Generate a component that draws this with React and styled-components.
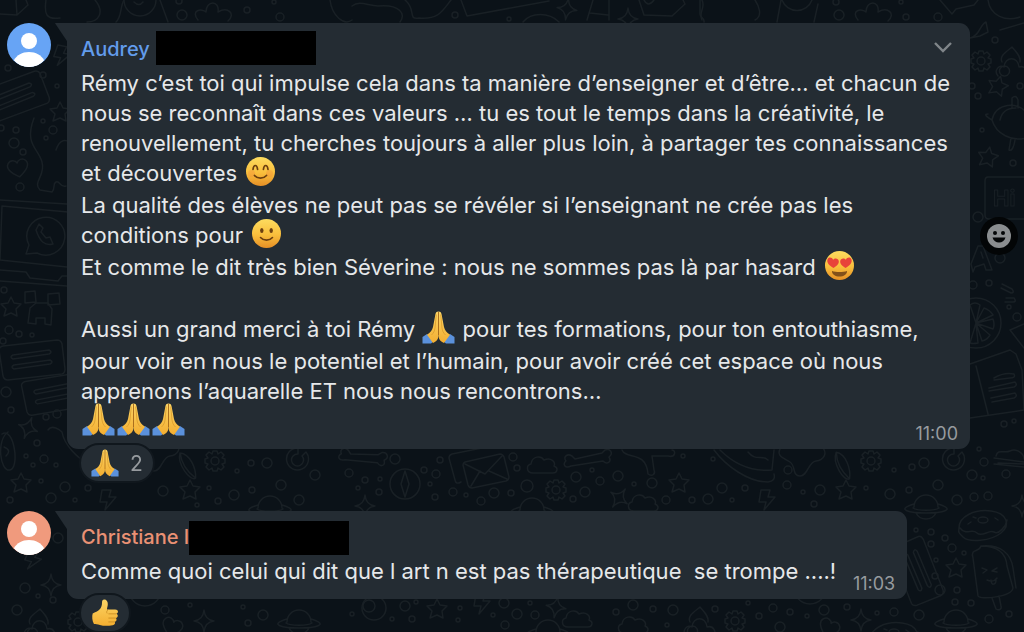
import React from 'react';
import styled, { createGlobalStyle } from 'styled-components';

const GlobalStyle = createGlobalStyle`
  * {
    box-sizing: border-box;
  }

  body {
    margin: 0;
    background-color: #0b1218;
    color: #e6e8ea;
    font-family: Inter, 'Noto Sans', sans-serif;
  }
`;

const Wallpaper = styled.svg`
  position: fixed;
  top: 0;
  left: 0;
  z-index: -1;
  width: 100%;
  height: 100%;
  fill: none;
  stroke: #192025;
  stroke-width: 1.5;
  stroke-linejoin: round;
  stroke-linecap: round;
`;

const Conversation = styled.main`
  display: flex;
  flex-direction: column;
  gap: 28px;
  padding: 23px 6px 0 7px;
`;

const MessageRow = styled.article`
  display: flex;
  align-items: flex-start;
`;

const Avatar = styled.svg`
  flex: none;
  width: 44px;
  height: 44px;
  margin-right: 16px;
  border-radius: 50%;
  background-color: ${props => props.$color};
`;

const MessageColumn = styled.div`
  flex: 0 1 auto;
  min-width: 0;
`;

const Bubble = styled.div`
  position: relative;
  padding: 8px 12px 4px 14px;
  border-radius: 0 11px 11px 11px;
  background-color: #242c33;

  &::before {
    content: '';
    position: absolute;
    top: 0;
    left: -12px;
    width: 13px;
    height: 18px;
    background-color: #242c33;
    clip-path: polygon(0 0, 100% 0, 100% 100%, 92% 100%, 8% 10%);
  }
`;

const BubbleHeader = styled.header`
  display: flex;
  align-items: flex-start;
  height: 37px;
`;

const Sender = styled.h2`
  margin: 0;
  font-size: 20px;
  font-weight: 500;
  line-height: 36px;
  color: ${props => props.$color};
`;

const Redaction = styled.span`
  width: 160px;
  height: 34px;
  margin: ${props => (props.$tight ? '2px 0 0' : '0 0 0 6px')};
  background-color: #000;
`;

const MenuButton = styled.button`
  display: flex;
  margin: 4px 3px 0 auto;
  padding: 0;
  border: none;
  background: none;
  color: #80868a;
  cursor: pointer;
`;

const BubbleBody = styled.div`
  display: grid;
`;

const Text = styled.p`
  grid-area: 1 / 1;
  margin: 0;
  padding-bottom: 7px;
  font-size: 22px;
  line-height: 30px;
  white-space: pre-wrap;

  /* keeps the last line clear of the time */
  &::after {
    content: '';
    display: inline-block;
    width: 59px;
    height: 1px;
    vertical-align: -9px;
  }
`;

const Time = styled.time`
  grid-area: 1 / 1;
  place-self: end;
  font-size: 18px;
  line-height: 22px;
  color: #979b9f;
`;

const InlineEmoji = styled.svg`
  width: 33px;
  height: 33px;
  margin: -3px 1px 2px;
  vertical-align: -9px;
`;

const Reaction = styled.button`
  position: relative;
  display: flex;
  align-items: center;
  gap: 11px;
  height: 40px;
  margin: -6px 0 0 12px;
  padding: 0 10px;
  border: 2px solid #10171d;
  border-radius: 20px;
  background-color: #242c33;
  color: #979b9f;
  font-family: inherit;
  font-size: 21px;
  cursor: pointer;
`;

const ReactionEmoji = styled.svg`
  width: 28px;
  height: 28px;
`;

const ReactButton = styled.button`
  flex: none;
  align-self: center;
  display: flex;
  align-items: center;
  justify-content: center;
  width: 38px;
  height: 38px;
  margin: 0 0 34px 10px;
  padding: 0;
  border: none;
  border-radius: 50%;
  background-color: #030506;
  cursor: pointer;
`;

const Face = ({ children }) => (
  <>
    <circle cx="16.5" cy="16.5" r="14.5" fill="url(#skin)" />
    {children}
  </>
);

const Arm = () => (
  <>
    <path d="M5 23 0.5 26v6.500H9L12 30z" fill="#5b91dc" />
    <path
      d="M16.500.5c-2 0-2.900 1-3.200 3.500L11 16c-.8 3.500-2.500 5.500-6 7.700l6 8.300c4-1.500 5.500-4.500 5.500-8z"
      fill="url(#palm)"
    />
    <path d="M14.300 3.500 13 17c-.3 3-1.500 5-3.500 7" fill="none" stroke="#d99a2b" strokeWidth=".8" />
  </>
);

const drawings = {
  blush: {
    label: '😊',
    art: (
      <Face>
        <circle cx="7.500" cy="18.500" r="3.500" fill="#f48b3c" opacity=".35" />
        <circle cx="25.500" cy="18.500" r="3.500" fill="#f48b3c" opacity=".35" />
        <g fill="none" stroke="#6b3f10" strokeWidth="1.700" strokeLinecap="round">
          <path d="M9 14.500c.3-2.800 1.200-4 2.300-4s2 1.200 2.300 4M19.400 14.500c.3-2.800 1.200-4 2.300-4s2 1.200 2.300 4" />
          <path d="M10.500 20.500c3 3.500 9 3.500 12 0" />
        </g>
      </Face>
    ),
  },
  smile: {
    label: '🙂',
    art: (
      <Face>
        <ellipse cx="11.800" cy="13.500" rx="1.700" ry="2.600" fill="#6b3f10" />
        <ellipse cx="21.200" cy="13.500" rx="1.700" ry="2.600" fill="#6b3f10" />
        <path d="M10.500 20.500c3 3.500 9 3.500 12 0" fill="none" stroke="#6b3f10" strokeWidth="1.600" strokeLinecap="round" />
      </Face>
    ),
  },
  love: {
    label: '😍',
    art: (
      <Face>
        <path d="M9 22c4 1.300 11 1.300 15 0 .3 3.500-3.500 5.500-7.500 5.500S8.700 25.500 9 22z" fill="#82501a" />
        <path d="M10.500 19C6 16.500 3.500 13.500 4.500 10.500s4.700-2.300 5.600.3c1.700-2.200 5.400-1.500 5.700 1.400.3 2.600-2.300 5-5.300 6.800z" fill="#e8433a" />
        <path d="M22.500 19c4.500-2.500 7-5.500 6-8.500s-4.700-2.300-5.600.3c-1.700-2.200-5.400-1.500-5.700 1.400-.3 2.600 2.300 5 5.300 6.800z" fill="#e8433a" />
      </Face>
    ),
  },
  pray: {
    label: '🙏',
    art: (
      <>
        <Arm />
        <g transform="matrix(-1 0 0 1 33 0)">
          <Arm />
        </g>
        <path d="M16.500 1v23" stroke="#a86a18" strokeWidth=".9" />
      </>
    ),
  },
  thumb: {
    label: '👍',
    art: (
      <>
        <path
          d="M2 17c3-1.500 6-2 8-4.500C12 10 13 8 13 4c0-2.500 1-3.500 2.500-3.500 3 0 4.300 2.500 4.300 5.500 0 2.500-.8 4-1 6.500h9.700c4 0 4.200 4.200 1.500 5 2.300 1 2 4.500-.7 5 1.500 1.300 1 4-1.300 4.400 1 2-.2 3.900-2.500 4.100-6 .9-11 .9-15-.5-3-.8-5-1-7-1C1.300 26 1 20 2 17z"
          fill="url(#palm)"
        />
        <path d="M20.500 17.500H30M20.500 22.500h8.800M20.500 27h7.500M20.500 12.500c-2 1-2.500 3-1.500 4.500" fill="none" stroke="#c98a20" />
      </>
    ),
  },
};

const Emoji = ({ name, as: Frame = InlineEmoji }) => (
  <Frame viewBox="0 0 33 33" role="img" aria-label={drawings[name].label}>
    {drawings[name].art}
  </Frame>
);

const doodleShapes = {
  star: 'M0-10 3-4 10-3 5 2 6 9 0 6-7 9-5 2-10-3-3-4z',
  sparkle: 'M0-11Q1-1 10 0 1 1 0 11-1 1-10 0-1-1 0-11z',
  bolt: 'M-6-10H3L1-3H8L-3 10-1 2H-8z',
  cloud: 'M-11 7c-7 0-7-8-2-9 1-8 10-9 13-4 7-3 12 2 10 6 5 2 3 7-1 7z',
  heart: 'M0 9C-9 3-12-2-9-6s8-2 9 1c1-3 6-5 9-1s0 9-9 15z',
  gear: 'M-2-10h4l1 3 3-2 3 3-2 3 3 1v4l-3 1 2 3-3 3-3-2-1 3h-4l-1-3-3 2-3-3 2-3-3-1v-4l3-1-2-3 3-3 3 2zM4 0a4 4 0 1 1-8 0 4 4 0 0 1 8 0z',
  planet: 'M-12 2a12 12 0 0 1 24 0M-12-1c-20 6-3 9 12 9s32-3 12-9M-10 8c4 8 16 8 20 0M-13 3c4 3 22 3 26 0',
  bottle: 'M-3-15c9 4 10 20 6 29-6 2-13-20-6-29zM-3-15c-2 9 0 20 6 29',
  donut: 'M-24 4C-24-8-8-15 8-13s20 14 10 22-32 10-38 4-4-5-4-9zM-23 4c6 8 12 0 17 5s12-4 17-1 12-6 13-12M-5-4a5 3 0 1 0 10 0 5 3 0 1 0-10 0M-15 0l3-2M12-6l3 2M-10-7l3 1',
  ice: 'M-19-18c-3-10 6-5 8-12 16 0 25 6 26 20l6 22c-1 9-33 12-35 8zM-11-30c20-2 30 8 32 22l3 20M0 22l4 11c3 2 6 0 5-3L7 20M-10-8l5 2-4 3M5-8l-5 3 5 1M-5 4c4 2 8 1 10-2M-1 4c0 6 5 5 5 0',
  letter: 'M-20-8 15-16q3 0 4 3l5 20q0 3-3 4l-34 7q-3 0-4-3l-5-20q0-2 2-3zM-20-6 0 4 17-14M-14 16-5 1M22 9 4 1M-24 12q-5 3-6-2l-6-22q0-3 3-4l30-6',
  card: 'M-28-14 26-20q4 0 5 4l3 25q0 4-3 5l-54 6q-4 0-5-4l-4-26q0-3 4-4zM-18-5l36-5q4 2 0 4l-36 5q-4-2 0-4zM-17 5l36-5q4 2 0 4l-36 5q-4-2 0-4z',
  bone: 'M-16-8c-5-3-9 1-6 5-4 3-1 8 5 5l32-5c4 4 9 1 6-4 5-4 1-9-4-7l-3 3-27 6z',
  blob: 'M-24-14c-8 10 2 12 8 16s2 14 10 14 8-14 16-15 12-8 6-14',
  cone: 'M-14 16c-5-6 2-12 6-9 1-11 14-11 15 0 7-2 10 6 6 9M-10 2c-3-6 4-10 10-15 4 5 9 9 8 15M-8 16a5 5 0 1 1 1 0',
};

const doodles = [
  ['star', 60, 112], ['star', 11, 307], ['star', 21, 483], ['star', 190, 490], ['star', 437, 609],
  ['star', 679, 483], ['star', 846, 490], ['star', 956, 568], ['star', 998, 86, 15], ['star', 988, 157, 10],
  ['sparkle', 28, 428, 20], ['sparkle', 51, 585], ['sparkle', 204, 621], ['sparkle', 365, 506],
  ['sparkle', 619, 498, 35], ['sparkle', 556, 607, 10], ['sparkle', 861, 620], ['sparkle', 567, 9, 8],
  ['sparkle', 628, 19], ['sparkle', 1022, 506], ['bolt', 62, 56, 10], ['bolt', 108, 500], ['bolt', 33, 560, 15],
  ['bolt', 482, 604], ['bolt', 767, 500], ['cloud', 544, 466], ['cloud', 645, 504], ['cloud', 579, 620],
  ['cloud', 635, 626], ['heart', 18, 168, -10], ['heart', 172, 627, 20], ['heart', 829, 628, 25],
  ['gear', 215, 461], ['gear', 556, 490], ['gear', 78, 622], ['gear', 735, 621], ['gear', 871, 461],
  ['gear', 981, 61], ['planet', 270, 506], ['planet', 299, 620], ['planet', 926, 505], ['planet', 956, 620],
  ['planet', 532, 508], ['planet', 548, 630], ['bottle', 188, 466, -20], ['bottle', 843, 466, -15],
  ['donut', 983, 524], ['donut', 894, 636], ['ice', 992, 576], ['letter', 485, 470], ['card', 31, 360],
  ['card', 54, 394, -3], ['card', 14, 97, -14], ['card', 917, 570, 75], ['bone', 588, 464], ['bone', 362, 462, 14],
  ['blob', 806, 460], ['blob', 160, 455], ['cone', 40, 622], ['cone', 700, 620], ['cone', 1012, 60],
];

// x, y, radius
const bubbles = [
  [182, 15, 5], [179, 1, 3], [247, 10, 3], [274, 2, 2], [280, 17, 4], [8, 68, 3], [43, 75, 3], [57, 86, 2],
  [1, 128, 3], [16, 130, 3], [14, 143, 5], [43, 121, 2], [53, 130, 4], [46, 138, 2], [23, 152, 3], [20, 187, 4],
  [4, 290, 3], [9, 330, 4], [19, 334, 3], [32, 335, 2], [3, 341, 3], [6, 392, 5], [11, 410, 3], [46, 417, 3],
  [57, 414, 4], [37, 443, 3], [26, 456, 2], [44, 459, 4], [33, 465, 2], [56, 465, 2], [41, 481, 2], [65, 487, 5],
  [51, 498, 5], [10, 500, 3], [75, 500, 2], [88, 488, 3], [163, 491, 5], [209, 488, 2], [218, 501, 3],
  [234, 495, 5], [252, 490, 3], [281, 485, 5], [237, 471, 2], [251, 463, 3], [267, 463, 5], [315, 475, 5],
  [299, 500, 5], [197, 505, 2], [58, 538, 5], [25, 588, 5], [38, 596, 2], [53, 600, 3], [17, 610, 5],
  [243, 607, 2], [263, 615, 5], [248, 623, 3], [190, 605, 2], [165, 610, 4], [349, 473, 4], [365, 480, 3],
  [380, 479, 2], [395, 459, 5], [440, 460, 3], [424, 470, 3], [436, 474, 4], [430, 484, 2], [358, 488, 2],
  [379, 492, 3], [453, 492, 4], [435, 497, 3], [466, 495, 2], [494, 493, 5], [481, 501, 4], [511, 493, 3],
  [513, 457, 4], [517, 468, 3], [527, 486, 6], [576, 477, 5], [592, 470, 2], [600, 481, 4], [585, 492, 5],
  [573, 499, 3], [618, 476, 5], [634, 484, 2], [652, 483, 5], [666, 500, 4], [692, 500, 3], [683, 456, 2],
  [352, 614, 2], [392, 619, 2], [405, 606, 5], [412, 619, 3], [416, 602, 2], [460, 608, 2], [458, 620, 2],
  [493, 615, 2], [504, 603, 5], [517, 614, 5], [505, 625, 4], [530, 603, 2], [535, 615, 4], [616, 612, 3],
  [633, 605, 5], [653, 609, 3], [673, 610, 5], [667, 625, 2], [715, 609, 3], [455, 15, 3], [509, 19, 2],
  [713, 459, 2], [722, 488, 5], [745, 488, 3], [708, 499, 5], [732, 500, 2], [788, 470, 4], [787, 485, 4],
  [803, 492, 2], [820, 490, 5], [814, 504, 3], [866, 488, 2], [890, 494, 5], [894, 470, 2], [912, 467, 3],
  [924, 463, 5], [938, 485, 5], [909, 490, 3], [972, 475, 5], [984, 462, 4], [979, 449, 2], [983, 478, 2],
  [957, 500, 5], [974, 497, 4], [988, 496, 4], [1006, 474, 4], [1004, 424, 3], [1014, 421, 2], [916, 530, 2],
  [931, 532, 3], [945, 538, 3], [931, 544, 3], [952, 548, 4], [964, 553, 2], [936, 560, 2], [935, 576, 3],
  [940, 590, 5], [957, 590, 3], [955, 602, 3], [971, 603, 3], [1009, 614, 3], [989, 619, 4], [894, 612, 4],
  [919, 615, 5], [877, 613, 2], [847, 607, 3], [824, 610, 5], [807, 616, 2], [790, 612, 3], [773, 608, 4],
  [780, 627, 5], [759, 616, 3], [748, 603, 2], [836, 2, 3], [839, 15, 5], [901, 2, 2], [906, 17, 3],
  [938, 17, 4], [995, 40, 3], [1020, 86, 3], [972, 86, 3], [978, 96, 3], [982, 130, 2], [1013, 163, 3],
  [978, 217, 5], [1000, 258, 5], [973, 285, 4], [989, 283, 3], [1009, 307, 2], [1017, 317, 4],
];

const ChatWallpaper = () => (
  <Wallpaper viewBox="0 0 1024 632" preserveAspectRatio="xMidYMin slice" aria-hidden="true">
    <defs>
      <linearGradient id="skin" x1="0" y1="0" x2="0" y2="1">
        <stop offset="0" stopColor="#fddc5f" />
        <stop offset=".55" stopColor="#f9be3c" />
        <stop offset="1" stopColor="#e58f26" />
      </linearGradient>
      <linearGradient id="palm" x1="0" y1="0" x2="0" y2="1">
        <stop offset="0" stopColor="#fcd565" />
        <stop offset="1" stopColor="#f3ae31" />
      </linearGradient>
    </defs>
    {bubbles.map(([x, y, r]) => (
      <circle key={`${x}-${y}`} cx={x} cy={y} r={r} />
    ))}
    {doodles.map(([shape, x, y, turn = 0]) => (
      <path key={`${shape}-${x}-${y}`} d={doodleShapes[shape]} transform={`translate(${x} ${y}) rotate(${turn})`} />
    ))}
    {/* row cut off by the top edge */}
    <path d="M0 14 17 15 28 5 26 0M17 15 16 0M46 0c-2 14 0 20 14 18M95 0c10 12 4 22-8 22M116 22c6-5 4-16 8-22M160 0l8 22" />
    <path d="M124 0a16 16 0 0 0 32 0M134 2q5 5 9 0M198 20c-8-10 4-12 8-8 0-12 14-12 12 0 10-6 18 2 10 9" />
    <path d="M330 0c2 16 14 26 22 20M352 6c8-6 16 0 26 0 22-2 28 8 22 16M405 0c12 10 2 20 14 18 20 2 24-8 32-18M461 0l6 16 82-15M523 22c8-10 26-10 36 0M587 20l6-20M609 20V0M590 13l18 2M639 0l5 15 28 1 13-12-2-4M644 0q4 8 10 0M700 0v14c0 4 5 4 4 8" />
    <path d="M702 20c-4-8 4-12 0-20M755 20c8-4 4-14 0-20M777 22l4-22M782 0a16 16 0 0 0 30 0M814 22l4-18M858 20c-8-10 4-12 8-8 0-12 14-12 12 0 10-6 18 2 10 9M940 0l12 14 4-5 18-4 4-5M988 0c2 16 18 22 32 17M1000 30l24-7" />
    {/* dinosaur, laptop, creeper and handset on the left */}
    <path d="M34 118c-10 26 4 30 8 44s-10 20-2 28l12 2c4-4 0-8 4-10s4 6 10 4M56 150c4-12 10-10 14-8" />
    <path d="M0 200l67 4M2 206l66 6M2 206 0 260l67 7M0 270l26 2 4 6 28 3 4-5h5M0 281l67 5" />
    <path d="M26 254l3-9a19 19 0 1 1 8 8zM36 230c4 12 9 16 17 14l-3-7-4 1-5-6 2-4-4-4z" />
    <path d="M25 292l10-1 1 11-11 1zM48 294l11-1 1 11-12 1zM30 308l6-5h12l4 6-1 16-6-1v-6h-9v6l-8-1z" />
    <path d="M48 430c4-6 12 0 14 2 2 12 14 26 30 34M2 434c12-8 18 34 8 36S-4 440 8 432M4 447q8 3 2 9" />
    {/* compass, eye, pie and ring between the messages */}
    <circle cx="405" cy="484" r="15" />
    <path d="M405 471 409 484 405 497 401 484z" />
    <circle cx="374" cy="608" r="12" />
    <circle cx="369" cy="606" r="6" />
    <circle cx="145" cy="590" r="16" />
    <circle cx="810" cy="588" r="16" />
    <path d="M306 452a11 11 0 1 1-8-4v6a6 6 0 1 0 4 2zM962 452a11 11 0 1 1-8-4v6a6 6 0 1 0 4 2z" />
    <path d="M714 450c12 16 34 32 54 32q8-1 6-8M720 450c14 14 30 22 52 20l2-20M748 452c8 10 14 2 20 8" />
    <path d="M622 450c4 10 24 0 26 24 4 3 8 0 6-4l-2-14 16 0c8 2 8-6 4-6" />
    {/* right-hand column */}
    <path d="M970 38c10-2 10-14 16-16l2 10-8 4z" />
    <path d="M992 120c4-18 26-18 34-8M992 120c4 14 20 22 34 18M1000 120c2-10 10-12 16-12M1012 108v-10q4-4 6 2v8M992 120q-10-6-4-6M1011 138l-2 12q4 2 6-10" />
    <path d="M1024 177h-36q-3 0-3 4v34q0 4 4 4h35" />
    <path d="M971 264l7-18h5l9 24h-6l-2-6-9 3-2 5zM981 252l2 6M1002 284l10 5q3 4-1 4l-10-5M1006 298h8q3 4-1 4h-8" />
    <circle cx="976" cy="323" r="25" />
    <path d="M976 323l-6-18q5-4 10 0zM976 323l8-15q6 2 9 7zM976 323l17-4q2 6 0 10zM976 323l14 12q-3 5-8 6zM976 323l2 20q-5 1-8 0z" />
    <path d="M1010 330l14-6M1010 330l14 18M970 364l40-14 6 4 6 16 2 40-54 8M976 366l12 48M994 378q10-6 20-4 2 4-4 4l-16 2M989 388l26-6q3 3-1 5l-25 4M991 398l24-5q3 3-1 5l-22 4" />
    <path d="M996 456c2-8 8-2 14-5s14 2 14 8M994 458l30 4M994 464l30 3M998 463l26 1" />
    <text x="993" y="206" fontSize="22" fontWeight="700" strokeWidth="1" fontFamily="Inter">Hi</text>
  </Wallpaper>
);

const Person = ({ color }) => (
  <Avatar $color={color} viewBox="0 0 44 44" role="img" aria-label="Avatar">
    <circle cx="22" cy="18" r="8" fill="#fff" />
    <path d="M7 37c3-5 8-8 15-8s12 3 15 8L30 44H14z" fill="#fff" />
    <path d="M7 37h30c-3 4-8 7-15 7S10 41 7 37z" fill="#fff" />
  </Avatar>
);

const Message = ({ color, avatarColor, name, tight, time, menu, reaction, count, children }) => (
  <MessageRow>
    <Person color={avatarColor} />
    <MessageColumn>
      <Bubble>
        <BubbleHeader>
          <Sender $color={color}>{name}</Sender>
          <Redaction $tight={tight} />
          {menu && (
            <MenuButton aria-label="Menu du message">
              <svg width="24" height="24" viewBox="0 0 24 24" fill="none" stroke="currentColor" strokeWidth="2.400">
                <path d="M4 8l8 8 8-8" />
              </svg>
            </MenuButton>
          )}
        </BubbleHeader>
        <BubbleBody>
          <Text>{children}</Text>
          <Time>{time}</Time>
        </BubbleBody>
      </Bubble>
      <Reaction>
        <Emoji name={reaction} as={ReactionEmoji} />
        {count}
      </Reaction>
    </MessageColumn>
    {menu && (
      <ReactButton aria-label="Réagir">
        <svg width="26" height="26" viewBox="0 0 26 26">
          <circle cx="13" cy="13" r="12" fill="#8a8d8f" />
          <circle cx="9" cy="10" r="2" fill="#030506" />
          <circle cx="17" cy="10" r="2" fill="#030506" />
          <path d="M6.500 14.500h13c-1 3.500-3.500 5-6.500 5s-5.500-1.500-6.500-5z" fill="#030506" />
        </svg>
      </ReactButton>
    )}
  </MessageRow>
);

const App = () => (
  <>
    <GlobalStyle />
    <ChatWallpaper />
    <Conversation>
      <Message name="Audrey" color="#629cec" avatarColor="#67a4f5" time="11:00" menu reaction="pray" count={2}>
        Rémy c’est toi qui impulse cela dans ta manière d’enseigner et d’être… et chacun de nous se reconnaît dans ces
        valeurs … tu es tout le temps dans la créativité, le renouvellement, tu cherches toujours à aller plus loin, à
        partager tes connaissances et découvertes <Emoji name="blush" />
        <br />
        La qualité des élèves ne peut pas se révéler si l’enseignant ne crée pas les conditions pour{' '}
        <Emoji name="smile" />
        <br />
        Et comme le dit très bien Séverine : nous ne sommes pas là par hasard <Emoji name="love" />
        <br />
        <br />
        Aussi un grand merci à toi Rémy <Emoji name="pray" /> pour tes formations, pour ton entouthiasme, pour voir en
        nous le potentiel et l’humain, pour avoir créé cet espace où nous apprenons l’aquarelle ET nous nous
        rencontrons…
        <br />
        <Emoji name="pray" />
        <Emoji name="pray" />
        <Emoji name="pray" />
      </Message>
      <Message name="Christiane I" tight color="#ea9174" avatarColor="#f09a7d" time="11:03" reaction="thumb">
        {'Comme quoi celui qui dit que l art n est pas thérapeutique  se trompe ....!'}
      </Message>
    </Conversation>
  </>
);

export default App;
